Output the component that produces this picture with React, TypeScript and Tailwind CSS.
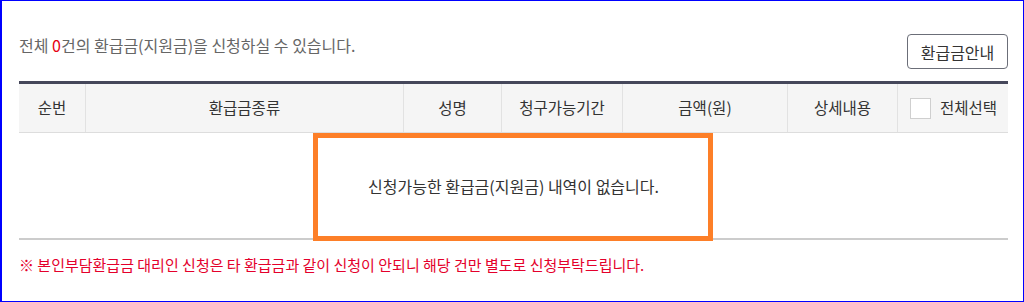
import React from "react";

const cols = [
  { label: "순번", w: "w-[66px]" },
  { label: "환급금종류", w: "w-[318px]" },
  { label: "성명", w: "w-[98px]" },
  { label: "청구가능기간", w: "w-[121px]" },
  { label: "금액(원)", w: "w-[165px]" },
  { label: "상세내용", w: "w-[110px]" },
];

export default function App() {
  return (
    <div
      className="w-[1024px] h-[302px] border border-l-2 border-[#0000ff] bg-white text-[#333] overflow-hidden"
      style={{ fontFamily: '"Noto Sans CJK KR", "Noto Sans", sans-serif' }}
    >
      <div className="w-[989px] ml-[17px] pt-[33px]">
        <div className="flex items-start justify-between mb-[12px]">
          <p className="text-[16px] leading-[22px] text-[#666]">
            전체 <span className="text-[#e60012]">0</span>건의 환급금(지원금)을 신청하실 수 있습니다.
          </p>
          <button className="h-[35px] w-[101px] border border-[#6b6e78] rounded-[4px] text-[16px] text-[#333] bg-white">
            환급금안내
          </button>
        </div>

        <div className="border-t-[3px] border-[#45475a]">
          <div className="flex h-[49px] bg-[#f5f5f5] border-b border-[#dddddd]">
            {cols.map((c, i) => (
              <div
                key={c.label}
                className={`${c.w} flex items-center justify-center text-[15.5px] text-[#333] ${i > 0 ? "border-l border-[#e2e2e2]" : ""}`}
              >
                {c.label}
              </div>
            ))}
            <div className="w-[111px] flex items-center gap-[9px] border-l border-[#e2e2e2] pl-[12px] text-[15.5px] text-[#333]">
              <span className="w-[21px] h-[21px] border border-[#cfcfcf] bg-white"></span>
              <span>전체선택</span>
            </div>
          </div>
          <div className="relative h-[107px] flex items-center justify-center border-b-2 border-[#cccccc]">
            <p className="text-[16px] text-[#333]">신청가능한 환급금(지원금) 내역이 없습니다.</p>
            <div className="absolute left-[294px] top-0 w-[400px] h-[108px] border-[5px] border-[#fd7f28]"></div>
          </div>
        </div>

        <p className="mt-[15px] text-[15px] leading-[20px] text-[#e4002b]">
          ※ 본인부담환급금 대리인 신청은 타 환급금과 같이 신청이 안되니 해당 건만 별도로 신청부탁드립니다.
        </p>
      </div>
    </div>
  );
}
